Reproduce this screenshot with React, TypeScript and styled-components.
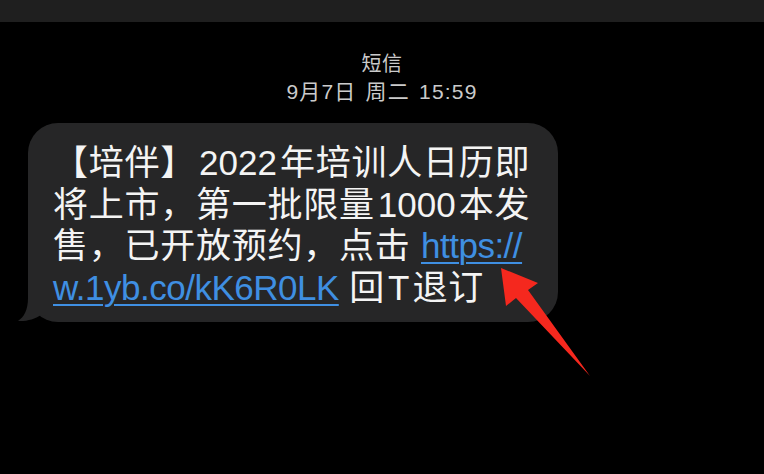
import React from "react";
import styled, { createGlobalStyle } from "styled-components";

const Global = createGlobalStyle`
  html, body { margin: 0; padding: 0; background: #000; }
  body { width: 764px; height: 474px; overflow: hidden; }
  #root { width: 764px; height: 474px; }
`;

const Stage = styled.div`
  position: relative;
  width: 764px;
  height: 474px;
  background: #000;
  display: flex;
  flex-direction: column;
  font-family: "Liberation Sans", "Noto Sans CJK SC", sans-serif;
`;

const TopBar = styled.div`
  height: 22px;
  background: #1f1f1f;
  flex: none;
`;

const Header = styled.div`
  display: flex;
  flex-direction: column;
  align-items: center;
  padding-top: 28px;
  color: #cbcbcb;
  font-size: 20px;
  line-height: 28px;
`;

const Title = styled.div`
  letter-spacing: 0.6px;
`;

const Stamp = styled.div`
  font-size: 21px;
  letter-spacing: 1.2px;
  word-spacing: 2px;
`;

const Thread = styled.div`
  display: flex;
  padding: 17px 0 0 28px;
`;

const Bubble = styled.div`
  position: relative;
  width: 530px;
  box-sizing: border-box;
  padding: 19px 0 14px 25px;
  background: #262627;
  border-radius: 30px;
  color: #f4f4f4;
  font-size: 35px;
  line-height: 41.5px;
  white-space: nowrap;
`;

const Tail = styled.svg`
  position: absolute;
  left: -12px;
  bottom: 0;
`;

const Message = styled.p`
  margin: 0;
  letter-spacing: 0.75px;
`;

const Latin = styled.span<{ $gap?: number }>`
  letter-spacing: 0;
  margin: 0 ${(p) => p.$gap ?? 3}px;
`;

const Link = styled.a`
  color: #3f8fe2;
  text-decoration: underline;
  text-decoration-thickness: 2px;
  text-underline-offset: 4px;
  letter-spacing: -0.5px;
`;

const Arrow = styled.svg`
  position: absolute;
  left: 0;
  top: 0;
  pointer-events: none;
`;

export default function App() {
  return (
    <>
      <Global />
      <Stage>
        <TopBar />
        <Header>
          <Title>短信</Title>
          <Stamp>9月7日 周二 15:59</Stamp>
        </Header>
        <Thread>
          <Bubble>
            <Tail width="30" height="36" viewBox="0 0 30 36">
              <path
                d="M12 0 L12 12 C12 24 8 31 2 35 C11 35.5 19 33 25 29 L30 30 L30 0 Z"
                fill="#262627"
              />
            </Tail>
            <Message>
              【培伴】<Latin>2022</Latin>年培训人日历即
              <br />
              将上市，第一批限量<Latin>1000</Latin>本发
              <br />
              售，已开放预约，点击{" "}
              <Link href="#">
                https://
                <br />
                w.1yb.co/kK6R0LK
              </Link>{" "}
              回<Latin>T</Latin>退订
            </Message>
          </Bubble>
        </Thread>
        <Arrow width="764" height="474" viewBox="0 0 764 474">
          <path
            d="M501 268 L538 283 L528 290 L590 376 L516 298 L506 306 Z"
            fill="#f5281e"
            strokeLinejoin="round"
          />
        </Arrow>
      </Stage>
    </>
  );
}
